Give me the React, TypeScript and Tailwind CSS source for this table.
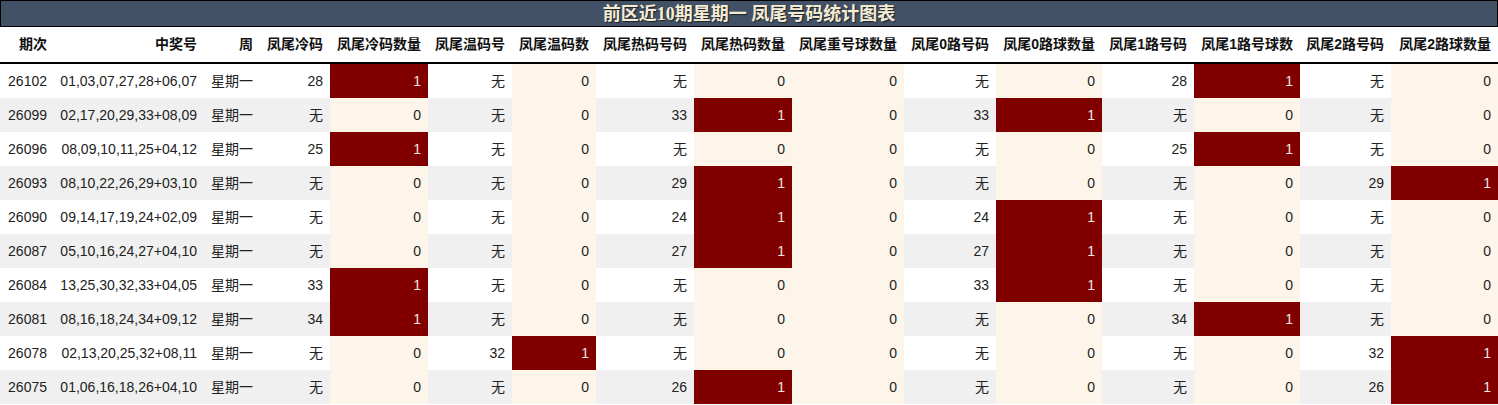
import React from "react";

// Column header labels, left to right
const headers = [
  "期次",
  "中奖号",
  "周",
  "凤尾冷码",
  "凤尾冷码数量",
  "凤尾温码号",
  "凤尾温码数",
  "凤尾热码号码",
  "凤尾热码数量",
  "凤尾重号球数量",
  "凤尾0路号码",
  "凤尾0路球数量",
  "凤尾1路号码",
  "凤尾1路号球数",
  "凤尾2路号码",
  "凤尾2路球数量",
];

// Count columns get the cream / red highlight
const countCols = new Set([4, 6, 8, 9, 11, 13, 15]);

const rows: string[][] = [
  ["26102", "01,03,07,27,28+06,07", "星期一", "28", "1", "无", "0", "无", "0", "0", "无", "0", "28", "1", "无", "0"],
  ["26099", "02,17,20,29,33+08,09", "星期一", "无", "0", "无", "0", "33", "1", "0", "33", "1", "无", "0", "无", "0"],
  ["26096", "08,09,10,11,25+04,12", "星期一", "25", "1", "无", "0", "无", "0", "0", "无", "0", "25", "1", "无", "0"],
  ["26093", "08,10,22,26,29+03,10", "星期一", "无", "0", "无", "0", "29", "1", "0", "无", "0", "无", "0", "29", "1"],
  ["26090", "09,14,17,19,24+02,09", "星期一", "无", "0", "无", "0", "24", "1", "0", "24", "1", "无", "0", "无", "0"],
  ["26087", "05,10,16,24,27+04,10", "星期一", "无", "0", "无", "0", "27", "1", "0", "27", "1", "无", "0", "无", "0"],
  ["26084", "13,25,30,32,33+04,05", "星期一", "33", "1", "无", "0", "无", "0", "0", "33", "1", "无", "0", "无", "0"],
  ["26081", "08,16,18,24,34+09,12", "星期一", "34", "1", "无", "0", "无", "0", "0", "无", "0", "34", "1", "无", "0"],
  ["26078", "02,13,20,25,32+08,11", "星期一", "无", "0", "32", "1", "无", "0", "0", "无", "0", "无", "0", "32", "1"],
  ["26075", "01,06,16,18,26+04,10", "星期一", "无", "0", "无", "0", "26", "1", "0", "无", "0", "无", "0", "26", "1"],
];

const gridCols =
  "grid grid-cols-[54px_150px_56px_70px_98px_84px_84px_98px_98px_112px_92px_106px_92px_106px_91px_107px]";

function cellClass(col: number, value: string, zebra: boolean) {
  if (countCols.has(col)) {
    return value === "1" ? "bg-[#800000] text-[#f3e4e4]" : "bg-[#fdf5ea] text-[#222]";
  }
  return zebra ? "bg-[#f0f0f0] text-[#222]" : "bg-white text-[#222]";
}

export default function App() {
  return (
    <div
      className="w-[1498px] bg-white"
      style={{ fontFamily: '"Liberation Sans", "Noto Sans CJK SC", sans-serif' }}
    >
      {/* Title bar */}
      <div className="flex h-[27px] items-center justify-center border border-black bg-[#435166]">
        <span
          className="text-[18px] font-bold leading-none text-[#f5ecd6] [text-shadow:1px_1px_1px_rgba(0,0,0,0.6)]"
          style={{ fontFamily: '"Liberation Serif", "Noto Sans CJK SC", serif' }}
        >
          前区近10期星期一 凤尾号码统计图表
        </span>
      </div>

      {/* Header row */}
      <div className={`${gridCols} h-[37px] border-b-2 border-black`}>
        {headers.map((h) => (
          <div
            key={h}
            className="flex items-center justify-end whitespace-nowrap px-[7px] text-[14px] font-bold text-[#111]"
          >
            {h}
          </div>
        ))}
      </div>

      {/* Data rows */}
      {rows.map((row, r) => (
        <div key={row[0]} className={`${gridCols} h-[34px]`}>
          {row.map((v, c) => (
            <div
              key={c}
              className={`flex items-center justify-end whitespace-nowrap px-[7px] text-[14px] ${cellClass(c, v, r % 2 === 1)}`}
            >
              {v}
            </div>
          ))}
        </div>
      ))}
    </div>
  );
}
